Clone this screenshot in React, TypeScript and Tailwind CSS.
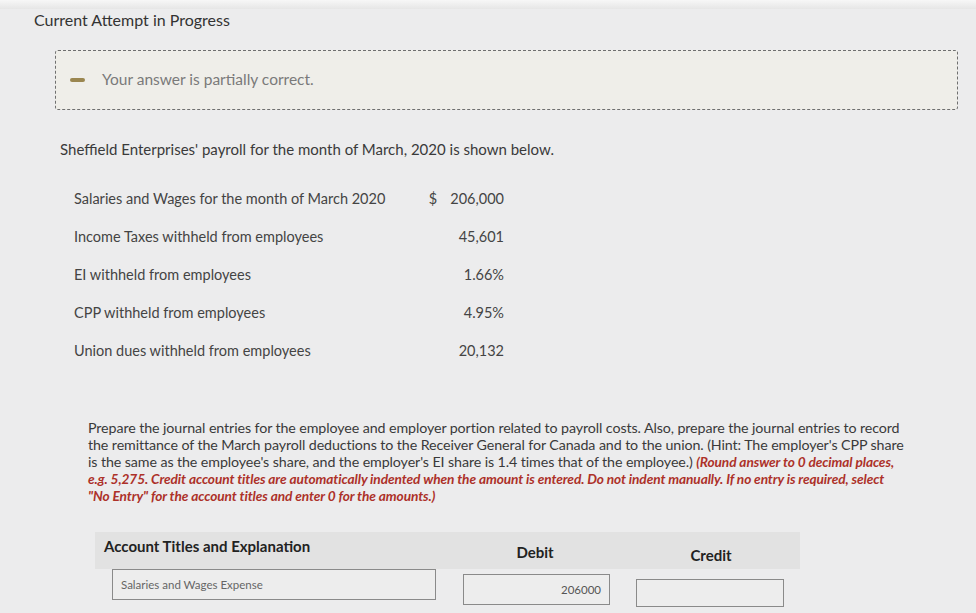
import React from 'react';

const rows = [
  { label: 'Salaries and Wages for the month of March 2020', value: '206,000', dollar: true },
  { label: 'Income Taxes withheld from employees', value: '45,601' },
  { label: 'EI withheld from employees', value: '1.66%' },
  { label: 'CPP withheld from employees', value: '4.95%' },
  { label: 'Union dues withheld from employees', value: '20,132' },
];

export default function App() {
  return (
    <div
      className="w-[976px] h-[613px] overflow-hidden bg-[#ececed] text-[#3d3d3d]"
      style={{ fontFamily: 'Lato, "Open Sans", sans-serif' }}
    >
      {/* top band */}
      <div className="h-[9px] bg-gradient-to-b from-[#f7f7f7] to-[#e6e6e6]" />

      <div className="pl-[34px] pt-[1px]">
        <h1 className="text-[16px] leading-[20px] text-[#333]">Current Attempt in Progress</h1>
      </div>

      {/* status box */}
      <div className="ml-[55px] mr-[18px] mt-[20px] h-[60px] rounded-[3px] border border-dashed border-[#6f6f6f] bg-[#efeee9] flex items-center pl-[14px]">
        <span className="block w-[15px] h-[4px] rounded-[2px] bg-[#9a8650]" />
        <span className="ml-[17px] text-[15.5px] text-[#7a7a7a]">Your answer is partially correct.</span>
      </div>

      <p className="ml-[60px] mt-[29px] text-[15px] leading-[20px] text-[#3a3a3a]">
        Sheffield Enterprises' payroll for the month of March, 2020 is shown below.
      </p>

      {/* data table */}
      <div className="ml-[74px] mt-[30px] w-[430px] flex flex-col gap-[18px]">
        {rows.map((r) => (
          <div key={r.label} className="flex items-center h-[20px] text-[14.5px] text-[#444]">
            <span className="flex-1">{r.label}</span>
            {r.dollar && <span className="mr-[13px]">$</span>}
            <span className="text-right">{r.value}</span>
          </div>
        ))}
      </div>

      {/* instructions */}
      <p className="ml-[88px] mt-[58px] whitespace-nowrap text-[14.25px] leading-[17px] text-[#3a3a3a] tracking-[-0.1px]">
        Prepare the journal entries for the employee and employer portion related to payroll costs. Also, prepare the journal entries to record
        <br />
        the remittance of the March payroll deductions to the Receiver General for Canada and to the union. (Hint: The employer's CPP share
        <br />
        is the same as the employee's share, and the employer's EI share is 1.4 times that of the employee.){' '}
        <span className="italic font-bold text-[#ad3129] text-[13.7px]">
          (Round answer to 0 decimal places,
          <br />
          e.g. 5,275. Credit account titles are automatically indented when the amount is entered. Do not indent manually. If no entry is required, select
          <br />
          "No Entry" for the account titles and enter 0 for the amounts.)
        </span>
      </p>

      {/* journal header */}
      <div className="ml-[95px] mt-[28px] w-[705px] h-[37px] bg-[#e2e2e2] flex items-start text-[15px] font-bold text-[#222]">
        <span className="pl-[9px] pt-[3px] w-[370px]">Account Titles and Explanation</span>
        <span className="w-[140px] text-center pt-[9px]">Debit</span>
        <span className="ml-[21px] w-[170px] text-center pt-[12px]">Credit</span>
      </div>

      {/* journal row */}
      <div className="ml-[112px] flex items-start">
        <div className="w-[324px] h-[31px] border border-[#8a8a8a] bg-[#ededed] flex items-center px-[8px] text-[11.5px] text-[#666]">
          Salaries and Wages Expense
        </div>
        <div className="ml-[27px] mt-[5px] w-[147px] h-[31px] border border-[#8a8a8a] bg-[#ededed] flex items-center justify-end px-[8px] text-[11.5px] text-[#555]">
          206000
        </div>
        <div className="ml-[26px] mt-[10px] w-[148px] h-[28px] border border-[#8a8a8a] bg-[#ededed]" />
      </div>
    </div>
  );
}
